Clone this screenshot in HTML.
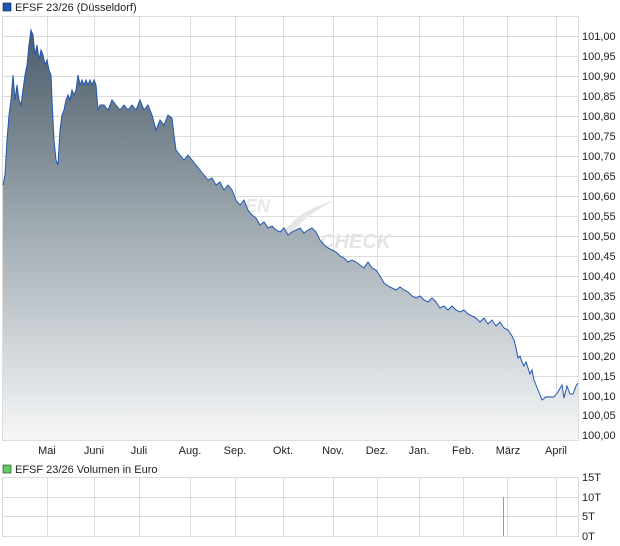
<!DOCTYPE html><html><head><style>body{margin:0;background:#fff;width:620px;height:546px;overflow:hidden}svg{display:block}text{font-family:"Liberation Sans",sans-serif;font-size:11px;fill:#222}</style></head><body>
<svg width="620" height="546" viewBox="0 0 620 546">
<defs><linearGradient id="g" gradientUnits="userSpaceOnUse" x1="0" y1="30" x2="0" y2="440"><stop offset="0" stop-color="#4a5c69"/><stop offset="0.5" stop-color="#a3adb4"/><stop offset="1" stop-color="#f6f7f8"/></linearGradient></defs>
<rect x="3" y="3" width="8" height="8" fill="#1f56b5" stroke="#123" stroke-width="0.6"/>
<text x="15" y="11">EFSF 23/26 (Düsseldorf)</text>
<g stroke="#dcdcdc" stroke-width="1">
<path d="M2.5 16.5H578.5M2.5 36.5H578.5M2.5 56.5H578.5M2.5 76.5H578.5M2.5 96.5H578.5M2.5 116.5H578.5M2.5 136.5H578.5M2.5 156.5H578.5M2.5 176.5H578.5M2.5 196.5H578.5M2.5 216.5H578.5M2.5 236.5H578.5M2.5 256.5H578.5M2.5 276.5H578.5M2.5 296.5H578.5M2.5 316.5H578.5M2.5 336.5H578.5M2.5 356.5H578.5M2.5 376.5H578.5M2.5 396.5H578.5M2.5 416.5H578.5M2.5 436.5H578.5"/>
<path d="M2.5 16V441M47.5 16V441M94.5 16V441M139.5 16V441M190.5 16V441M235.5 16V441M283.5 16V441M333.5 16V441M377.5 16V441M419.5 16V441M463.5 16V441M507.5 16V441M556.5 16V441M578.5 16V441M2 440.5H579"/>
<path d="M2.5 477.5H578.5M2.5 497.5H578.5M2.5 516.5H578.5M2.5 536.5H578.5M2.5 477V537M47.5 477V537M94.5 477V537M139.5 477V537M190.5 477V537M235.5 477V537M283.5 477V537M333.5 477V537M377.5 477V537M419.5 477V537M463.5 477V537M507.5 477V537M556.5 477V537M578.5 477V537"/>
</g>
<text x="320" y="248" style="font-size:20px;font-style:italic;font-weight:bold;fill:#e4e4e4">CHECK</text>
<text x="245" y="212" style="font-size:18px;font-style:italic;font-weight:bold;fill:#e8e8e8">EN</text>
<path d="M285 230 Q300 210 335 200 Q305 215 290 235 Z" fill="#e6e6e6"/>
<polygon fill="url(#g)" points="3,440 3,185 5,175 7,140 9,115 11,100 13,75 15,100 17,85 19,100 21,105 23,90 25,75 27,65 29,45 31,30 33,35 35,55 37,45 39,60 41,50 43,55 45,65 47,60 49,70 51,75 52,100 54,140 56,160 58,165 60,130 62,115 64,110 66,100 68,95 70,100 72,90 74,95 76,90 78,75 80,85 82,80 84,85 86,80 88,85 90,80 92,85 94,80 96,85 98,110 100,105 104,105 108,110 112,100 116,105 120,110 124,105 128,110 132,105 136,110 140,100 144,110 148,105 152,115 156,130 160,120 164,125 168,115 172,118 174,135 176,150 180,155 184,160 188,155 192,160 196,165 200,170 204,175 208,180 212,178 216,185 220,182 224,190 228,185 232,190 236,200 240,205 244,200 248,210 252,215 256,218 260,225 264,222 268,228 272,226 276,230 280,232 284,228 288,235 292,232 296,230 300,228 304,233 308,230 312,228 316,232 320,240 324,245 328,248 332,250 336,252 340,256 344,258 348,262 352,260 356,262 360,265 364,268 368,262 372,268 376,270 380,276 384,283 388,286 392,288 396,290 400,287 404,290 408,292 412,296 416,298 420,296 424,300 428,302 432,298 436,302 440,308 444,306 448,310 452,306 456,310 460,312 464,310 468,314 472,316 476,318 480,322 484,318 488,324 492,320 496,326 500,322 504,328 508,330 512,336 514,340 516,348 518,358 520,356 522,362 524,366 526,362 528,368 530,374 532,370 534,380 538,390 542,400 546,397 550,397 554,397 558,392 562,385 564,398 567,386 570,394 573,394 576,386 578,383 578,440"/>
<polyline fill="none" stroke="#1f56b5" stroke-width="1" points="3,185 5,175 7,140 9,115 11,100 13,75 15,100 17,85 19,100 21,105 23,90 25,75 27,65 29,45 31,30 33,35 35,55 37,45 39,60 41,50 43,55 45,65 47,60 49,70 51,75 52,100 54,140 56,160 58,165 60,130 62,115 64,110 66,100 68,95 70,100 72,90 74,95 76,90 78,75 80,85 82,80 84,85 86,80 88,85 90,80 92,85 94,80 96,85 98,110 100,105 104,105 108,110 112,100 116,105 120,110 124,105 128,110 132,105 136,110 140,100 144,110 148,105 152,115 156,130 160,120 164,125 168,115 172,118 174,135 176,150 180,155 184,160 188,155 192,160 196,165 200,170 204,175 208,180 212,178 216,185 220,182 224,190 228,185 232,190 236,200 240,205 244,200 248,210 252,215 256,218 260,225 264,222 268,228 272,226 276,230 280,232 284,228 288,235 292,232 296,230 300,228 304,233 308,230 312,228 316,232 320,240 324,245 328,248 332,250 336,252 340,256 344,258 348,262 352,260 356,262 360,265 364,268 368,262 372,268 376,270 380,276 384,283 388,286 392,288 396,290 400,287 404,290 408,292 412,296 416,298 420,296 424,300 428,302 432,298 436,302 440,308 444,306 448,310 452,306 456,310 460,312 464,310 468,314 472,316 476,318 480,322 484,318 488,324 492,320 496,326 500,322 504,328 508,330 512,336 514,340 516,348 518,358 520,356 522,362 524,366 526,362 528,368 530,374 532,370 534,380 538,390 542,400 546,397 550,397 554,397 558,392 562,385 564,398 567,386 570,394 573,394 576,386 578,383"/>
<g>
<text x="582" y="40">101,00</text><text x="582" y="80">100,90</text><text x="582" y="120">100,80</text><text x="582" y="160">100,70</text><text x="582" y="200">100,60</text><text x="582" y="240">100,50</text><text x="582" y="280">100,40</text><text x="582" y="320">100,30</text><text x="582" y="360">100,20</text><text x="582" y="400">100,10</text><text x="582" y="439">100,00</text>
<text x="582" y="60">100,95</text><text x="582" y="100">100,85</text><text x="582" y="140">100,75</text><text x="582" y="180">100,65</text><text x="582" y="220">100,55</text><text x="582" y="260">100,45</text><text x="582" y="300">100,35</text><text x="582" y="340">100,25</text><text x="582" y="380">100,15</text><text x="582" y="419">100,05</text>
</g>
<g text-anchor="middle">
<text x="47" y="454">Mai</text><text x="94" y="454">Juni</text><text x="139" y="454">Juli</text><text x="190" y="454">Aug.</text><text x="235" y="454">Sep.</text><text x="283" y="454">Okt.</text><text x="333" y="454">Nov.</text><text x="377" y="454">Dez.</text><text x="419" y="454">Jan.</text><text x="463" y="454">Feb.</text><text x="508" y="454">März</text><text x="556" y="454">April</text>
</g>
<rect x="3" y="465" width="8" height="8" fill="#5fce5f" stroke="#232" stroke-width="0.6"/>
<text x="15" y="473">EFSF 23/26 Volumen in Euro</text>
<text x="582" y="481">15T</text><text x="582" y="501">10T</text><text x="582" y="520">5T</text><text x="582" y="540">0T</text>
<rect x="503" y="497" width="1" height="39" fill="#5c5"/>
</svg></body></html>
